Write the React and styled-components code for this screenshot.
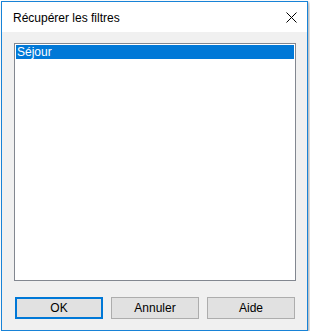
import React from "react";
import styled, { createGlobalStyle } from "styled-components";

const GlobalStyle = createGlobalStyle`
  html, body {
    margin: 0;
    padding: 0;
    background: #ffffff;
  }
  body {
    font-family: "Liberation Sans", Arial, sans-serif;
    font-size: 12px;
  }
`;

const RecupererFiltres = () => {
  return (
    <Window>
      <TitleBar>
        <Title>Récupérer les filtres</Title>
        <CloseButton aria-label="Fermer">
          <svg width="11" height="11" viewBox="0 0 11 11">
            <path d="M0.5 0.5 L10.5 10.5 M10.5 0.5 L0.5 10.5" stroke="#000" strokeWidth="1" />
          </svg>
        </CloseButton>
      </TitleBar>
      <Body>
        <ListBox>
          <ListItem selected>Séjour</ListItem>
        </ListBox>
        <ButtonRow>
          <Button primary>OK</Button>
          <Button>Annuler</Button>
          <Button>Aide</Button>
        </ButtonRow>
      </Body>
    </Window>
  );
};

const Window = styled.div`
  margin: 1px 0 0 1px;
  width: 307px;
  height: 330px;
  box-sizing: border-box;
  border: 1px solid #1883d7;
  background: #f0f0f0;
  display: flex;
  flex-direction: column;
  box-shadow: 1px 1px 2px rgba(0, 0, 0, 0.25), 2px 3px 4px rgba(0, 0, 0, 0.12);
`;

const TitleBar = styled.div`
  height: 30px;
  background: #ffffff;
  display: flex;
  align-items: center;
  justify-content: space-between;
  padding: 0 10px 0 11px;
`;

const Title = styled.span`
  color: #000;
  font-size: 12px;
  margin-top: 1px;
`;

const CloseButton = styled.div`
  width: 11px;
  height: 11px;
  display: flex;
  margin-top: 1px;
`;

const Body = styled.div`
  flex: 1;
  display: flex;
  flex-direction: column;
  padding: 11px 11px 11px 12px;
`;

const ListBox = styled.div`
  height: 238px;
  box-sizing: border-box;
  border: 1px solid #828790;
  background: #ffffff;
  padding: 1px;
`;

const ListItem = styled.div`
  height: 14px;
  line-height: 14px;
  padding-left: 1px;
  font-size: 12px;
  background: ${(p) => (p.selected ? "#0078d7" : "transparent")};
  color: ${(p) => (p.selected ? "#ffffff" : "#000000")};
`;

const ButtonRow = styled.div`
  display: flex;
  gap: 8px;
  margin-top: 16px;
  padding-left: 1px;
`;

const Button = styled.button`
  width: 88px;
  height: 22px;
  box-sizing: border-box;
  padding: 0;
  font-family: "Liberation Sans", Arial, sans-serif;
  font-size: 12px;
  color: #000;
  background: #e1e1e1;
  border: ${(p) => (p.primary ? "2px solid #0078d7" : "1px solid #adadad")};
`;

const App = () => (
  <>
    <GlobalStyle />
    <RecupererFiltres />
  </>
);

export default App;
